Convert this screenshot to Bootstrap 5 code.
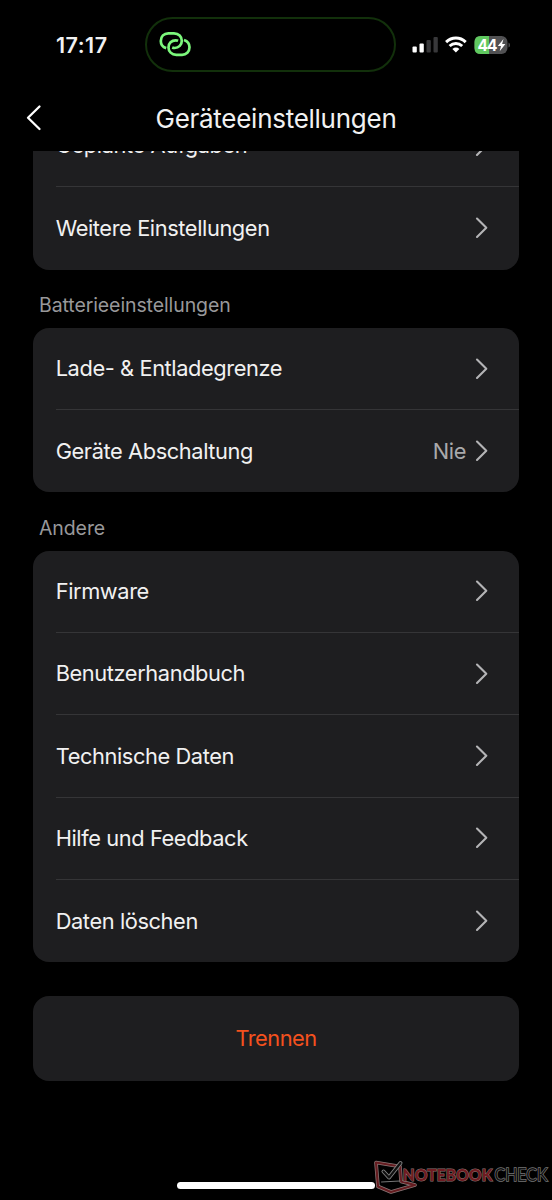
<!DOCTYPE html>
<html lang="de">
<head>
  <meta charset="UTF-8">
  <meta name="viewport" content="width=device-width, initial-scale=1, viewport-fit=cover">
  <title>Geräteeinstellungen</title>
  <link href="https://cdn.jsdelivr.net/npm/bootstrap@5.3.0/dist/css/bootstrap.min.css" rel="stylesheet">
  <style>
    body { background-color: #000; color: #f1f1f1; font-family: Inter, "Liberation Sans", sans-serif; font-size: 21.8px; letter-spacing: -.4px; }
    .screen { width: 552px; height: 1200px; }
    .top-area { height: 151px; }
    .status { height: 71.5px; padding: 17px 42px 0 56px; }
    .clock { width: 89.5px; padding-top: 1px; font-size: 21.5px; font-weight: 600; letter-spacing: .5px; }
    .island { width: 251px; height: 54.5px; border: 2px solid #12300b; border-radius: 28px; padding-left: 10.5px; }
    .signals { margin-left: 16.5px; padding-top: 1px; }
    .title-bar { height: 79.5px; padding-top: 14px; }
    .title-bar h1 { font-size: 26px; font-weight: 400; letter-spacing: -.27px; }
    .back { left: 25px; top: 32.5px; line-height: 0; }
    .settings { padding: 0 33px; }
    .scrolled { margin-top: -46px; }
    .group { background-color: #1e1e20; border-radius: 16px; }
    .entry { height: 82.3px; margin-left: 22.7px; padding-right: 30px; border-bottom: 1.5px solid #353537; }
    .entry:last-child { border-bottom: 0; }
    .entry svg { margin-left: 9px; }
    .group-label { height: 58.3px; padding: 13px 0 0 6px; font-size: 19.5px; color: #98989a; letter-spacing: -.1px; }
    .value { color: #a9a9ab; }
    .disconnect { height: 84.5px; margin-top: 34px; color: #f4511e; background-color: #1e1e20; border-radius: 16px; border: 0; font-size: 21.8px; letter-spacing: -.5px; }
    .home-bar { width: 198px; height: 7px; bottom: 11px; left: 177px; background-color: #fff; }
    .watermark { left: 372px; top: 1157px; font-family: Lato, sans-serif; }
  </style>
</head>
<body>
  <div class="screen position-relative d-flex flex-column overflow-hidden">
    <header class="top-area flex-shrink-0">
      <div class="status d-flex">
        <div class="clock d-flex align-items-center">17:17</div>
        <div class="island d-flex align-items-center">
          <svg width="34" height="28" viewBox="0 0 34 28" fill="none" stroke="#7cf87c" stroke-width="2.7" stroke-linecap="butt">
            <path d="M8.2 18.1C4.8 17 2.8 14 2.8 10.9C2.8 6.4 6 3.3 10.2 3.3H16C20.7 3.3 23.8 6.7 23.8 10.7C23.8 14.9 20.7 18 16.7 18C15.7 18 14.9 17.9 14.2 17.6"/>
            <path d="M26 10C29.3 11.1 31.5 14 31.5 17.3C31.5 21.7 28.2 24.8 24.1 24.8H18.3C13.6 24.8 10.5 21.4 10.5 17.4C10.5 13.3 13.6 10.3 17.6 10.3C18.6 10.3 19.4 10.4 20.1 10.7"/>
          </svg>
        </div>
        <div class="signals d-flex align-items-center">
          <svg width="98" height="24" viewBox="0 0 98 24">
            <rect x="0.5" y="13.5" width="4.3" height="6" rx="1" fill="#fff"/>
            <rect x="7.5" y="10.5" width="4.3" height="9" rx="1" fill="#fff"/>
            <rect x="14.5" y="7" width="4.3" height="12.5" rx="1" fill="#38383a"/>
            <rect x="21.5" y="4" width="4.3" height="15.5" rx="1" fill="#38383a"/>
            <g fill="none" stroke="#fff" stroke-width="3">
              <path d="M34.1 9.1C39.8 3.7 48 3.7 53.7 9.1"/>
              <path d="M37.6 13C41.3 9.6 46.5 9.6 50.2 13"/>
            </g>
            <path d="M43.9 19.4L40.4 15.9C42.4 14.1 45.4 14.1 47.4 15.9Z" fill="#fff"/>
            <rect x="62.5" y="3" width="33" height="18" rx="6" fill="#515153"/>
            <path d="M77 3H68.5Q62.5 3 62.5 9V15Q62.5 21 68.5 21H77Z" fill="#5fc85f"/>
            <path d="M96.5 9.5Q98 10 98 12T96.5 14.5Z" fill="#515153"/>
            <text x="65.5" y="17.5" font-size="15.5" font-weight="700" textLength="20" letter-spacing="0" fill="#fff">44</text>
            <path d="M91.5 6L85.8 13H89L87.7 18.2L93.4 11H90.1Z" fill="#fff"/>
          </svg>
        </div>
      </div>
      <div class="title-bar position-relative d-flex align-items-center justify-content-center">
        <a class="back position-absolute" href="#" aria-label="Zurück">
          <svg width="18" height="28" viewBox="0 0 18 28" fill="none" stroke="#fff" stroke-width="2.3" stroke-linecap="round" stroke-linejoin="round"><path d="M14.5 2.5L3 13.8L14.5 25"/></svg>
        </a>
        <h1 class="m-0">Geräteeinstellungen</h1>
      </div>
    </header>

    <svg class="d-none">
      <symbol id="chevron" viewBox="0 0 14 22"><path d="M2 1.5L11.3 10.7L2 19.9" fill="none" stroke="#b4b4b6" stroke-width="2.1" stroke-linecap="round" stroke-linejoin="round"/></symbol>
    </svg>

    <main class="settings flex-fill overflow-hidden">
      <div class="group scrolled">
        <div class="entry d-flex align-items-center"><span class="me-auto">Geplante Aufgaben</span><svg width="14" height="22"><use href="#chevron"/></svg></div>
        <div class="entry d-flex align-items-center"><span class="me-auto">Weitere Einstellungen</span><svg width="14" height="22"><use href="#chevron"/></svg></div>
      </div>

      <div class="group-label d-flex align-items-center">Batterieeinstellungen</div>
      <div class="group">
        <div class="entry d-flex align-items-center"><span class="me-auto">Lade- &amp; Entladegrenze</span><svg width="14" height="22"><use href="#chevron"/></svg></div>
        <div class="entry d-flex align-items-center"><span class="me-auto">Geräte Abschaltung</span><span class="value">Nie</span><svg width="14" height="22"><use href="#chevron"/></svg></div>
      </div>

      <div class="group-label d-flex align-items-center">Andere</div>
      <div class="group">
        <div class="entry d-flex align-items-center"><span class="me-auto">Firmware</span><svg width="14" height="22"><use href="#chevron"/></svg></div>
        <div class="entry d-flex align-items-center"><span class="me-auto">Benutzerhandbuch</span><svg width="14" height="22"><use href="#chevron"/></svg></div>
        <div class="entry d-flex align-items-center"><span class="me-auto">Technische Daten</span><svg width="14" height="22"><use href="#chevron"/></svg></div>
        <div class="entry d-flex align-items-center"><span class="me-auto">Hilfe und Feedback</span><svg width="14" height="22"><use href="#chevron"/></svg></div>
        <div class="entry d-flex align-items-center"><span class="me-auto">Daten löschen</span><svg width="14" height="22"><use href="#chevron"/></svg></div>
      </div>

      <button type="button" class="disconnect btn w-100">Trennen</button>
    </main>

    <div class="home-bar position-absolute rounded-pill"></div>
    <svg class="watermark position-absolute" width="180" height="43" viewBox="0 0 180 43">
      <g fill="none" stroke-linejoin="round" stroke-linecap="round">
        <path d="M28 9.5L4 5.5L6 29.5L19 35L43 28L29 24.5Z" stroke="#8a7777" stroke-width="3.6"/>
        <path d="M28 9.5L4 5.5L6 29.5L19 35L43 28L29 24.5Z" stroke="#651c20" stroke-width="2.2"/>
        <path d="M9.5 25L28 24" stroke="#777" stroke-width="1"/>
        <path d="M11.5 14.5L17 20.5L28.5 6" stroke="#858585" stroke-width="4"/>
        <path d="M11.5 14.5L17 20.5L28.5 6" stroke="#111" stroke-width="2.2"/>
      </g>
      <g font-size="17" letter-spacing="0" paint-order="stroke">
        <text x="30.5" y="23.7" font-weight="900" textLength="90" lengthAdjust="spacingAndGlyphs" fill="#701c21" stroke="#8a7777" stroke-width="1">NOTEBOOK</text>
        <text x="122.5" y="23.7" font-weight="400" textLength="53" lengthAdjust="spacingAndGlyphs" fill="#111" stroke="#777" stroke-width="1.4">CHECK</text>
      </g>
    </svg>
  </div>
  <script src="https://cdn.jsdelivr.net/npm/bootstrap@5.3.0/dist/js/bootstrap.bundle.min.js"></script>
</body>
</html>
